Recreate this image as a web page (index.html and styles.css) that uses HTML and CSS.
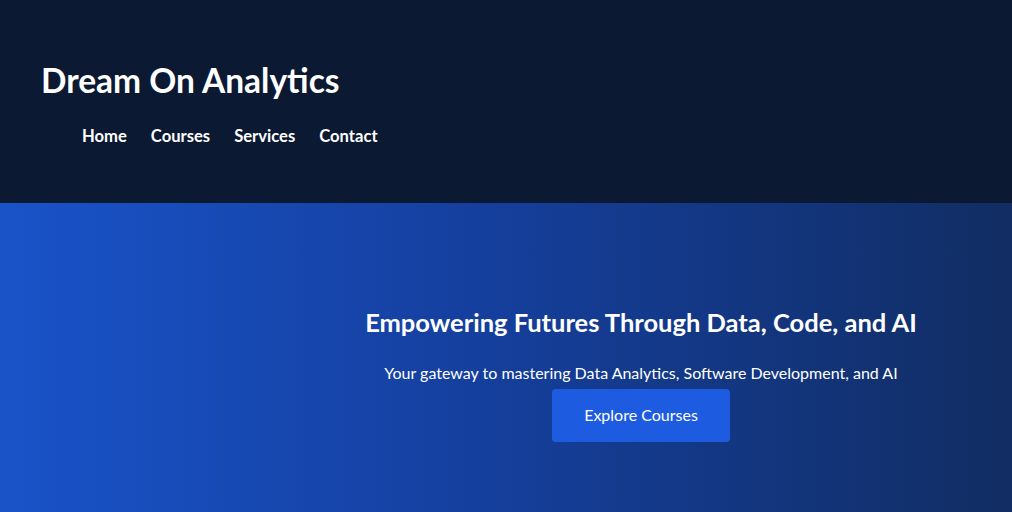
FILE: index.html
```html
<!DOCTYPE html>
<html lang="en">
<head>
<meta charset="utf-8">
<title>Dream On Analytics</title>
<link rel="stylesheet" href="styles.css">
</head>
<body>
<header class="site-header">
  <h1 class="brand">Dream On Analytics</h1>
  <nav class="main-nav">
    <ul class="nav-list">
      <li><a href="#">Home</a></li>
      <li><a href="#">Courses</a></li>
      <li><a href="#">Services</a></li>
      <li><a href="#">Contact</a></li>
    </ul>
  </nav>
</header>
<section class="hero">
  <div class="hero-media"></div>
  <div class="hero-content">
    <h2 class="hero-title">Empowering Futures Through Data, Code, and AI</h2>
    <p class="hero-sub">Your gateway to mastering Data Analytics, Software Development, and AI</p>
    <a class="btn" href="#">Explore Courses</a>
  </div>
</section>
</body>
</html>
```
FILE: styles.css
```css
* { box-sizing: border-box; }
html, body { margin: 0; padding: 0; }
body {
  font-family: Lato, "Noto Sans", sans-serif;
  color: #fff;
  background: #102d62;
}
.site-header {
  background: #0b1932;
  height: 203px;
  padding: 60px 41px 0;
}
.brand {
  margin: 0;
  font-size: 33.5px;
  line-height: 40px;
  font-weight: 700;
}
.main-nav { margin-top: 26px; }
.nav-list {
  list-style: none;
  margin: 0;
  padding: 0 0 0 41px;
  display: flex;
  gap: 24px;
}
.nav-list a {
  color: #fff;
  text-decoration: none;
  font-weight: 700;
  font-size: 16.6px;
  line-height: 20px;
}
.hero {
  display: flex;
  height: 309px;
  background: linear-gradient(to right, #1953c9, #1540a0 45%, #112d63);
}
.hero-media { width: 270px; flex: none; }
.hero-content {
  flex: 1;
  display: flex;
  flex-direction: column;
  align-items: center;
  text-align: center;
  padding-top: 104px;
}
.hero-title {
  margin: 0;
  font-size: 25.5px;
  line-height: 30px;
  font-weight: 700;
}
.hero-sub {
  margin: 25px 0 0;
  font-size: 16px;
  line-height: 22px;
}
.btn {
  margin-top: 5px;
  display: inline-block;
  background: #1d5be0;
  color: #fff;
  text-decoration: none;
  font-size: 16px;
  line-height: 20px;
  padding: 16px 32px 17px;
  border-radius: 4px;
}
```
